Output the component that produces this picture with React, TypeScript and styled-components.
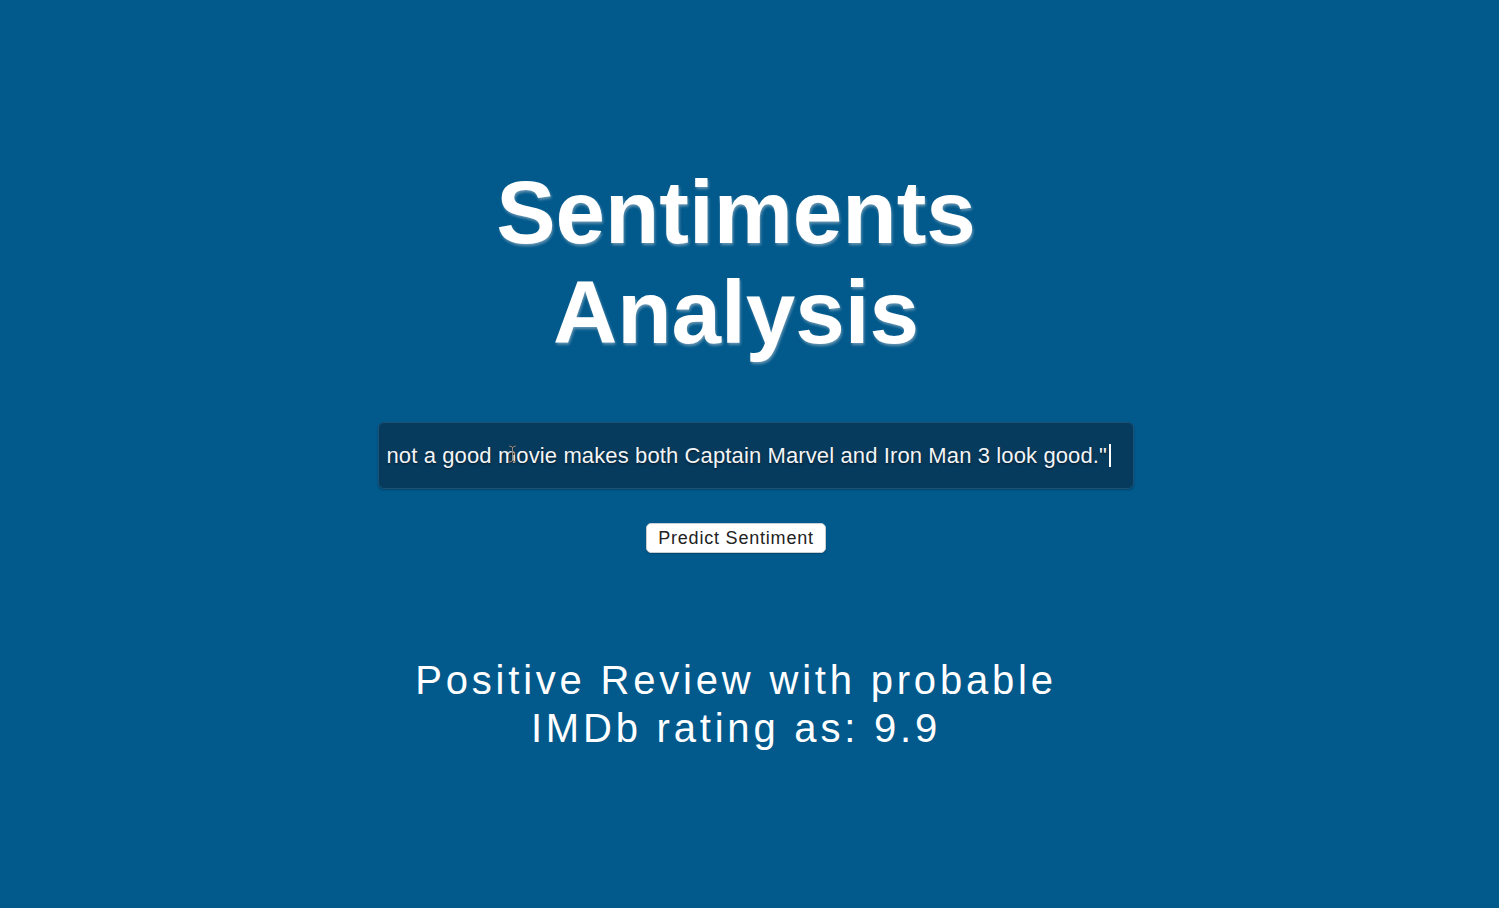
import React from "react";
import styled, { createGlobalStyle } from "styled-components";

const Global = createGlobalStyle`
  html, body { margin: 0; padding: 0; }
  body {
    background: #01598c;
    font-family: "Liberation Sans", Arial, Helvetica, sans-serif;
    min-height: 908px;
  }
`;

const Page = styled.main`
  display: flex;
  flex-direction: column;
  align-items: center;
  padding: 162px 27px 0 0;
  min-height: 908px;
  box-sizing: border-box;
`;

const Title = styled.h1`
  margin: 0;
  width: 620px;
  text-align: center;
  color: #ffffff;
  font-size: 89px;
  line-height: 100px;
  font-weight: 700;
  text-shadow: 1px 2px 3px rgba(190, 200, 210, 0.55);
`;

const Field = styled.div`
  position: relative;
  margin: 60px 0 0 40px;
  width: 756px;
  height: 67px;
  box-sizing: border-box;
  padding: 0 22px 0 17px;
  display: flex;
  align-items: center;
  justify-content: flex-end;
  overflow: hidden;
  background: #073b5d;
  border: 1px solid #1d5275;
  border-radius: 6px;
  box-shadow: 0 1px 2px rgba(0, 0, 0, 0.25);
`;

const FieldText = styled.span`
  flex: none;
  white-space: nowrap;
  color: #f2f5f8;
  font-size: 22px;
  letter-spacing: 0.12px;
  text-shadow: 0 1px 2px rgba(0, 0, 0, 0.6);
`;

const Caret = styled.span`
  flex: none;
  width: 2px;
  height: 23px;
  margin-left: 2px;
  background: #ffffff;
`;

const Pointer = styled.svg`
  position: absolute;
  left: 129px;
  top: 22px;
`;

const Button = styled.button`
  margin-top: 34px;
  width: 180px;
  height: 30px;
  padding: 0;
  border: 1px solid #c8ced4;
  border-radius: 5px;
  background: #ffffff;
  color: #222222;
  font-family: "Liberation Sans", Arial, Helvetica, sans-serif;
  font-size: 18px;
  letter-spacing: 0.8px;
  cursor: pointer;
  box-shadow: 0 1px 1px rgba(0, 0, 0, 0.2);
`;

const Result = styled.p`
  margin: 103px 0 0 0;
  width: 700px;
  text-align: center;
  color: #ffffff;
  font-size: 40px;
  line-height: 48px;
  letter-spacing: 3.8px;
`;

export default function App() {
  return (
    <>
      <Global />
      <Page>
        <Title>Sentiments Analysis</Title>
        <Field>
          <FieldText>
            not a good movie makes both Captain Marvel and Iron Man 3 look good."
          </FieldText>
          <Caret />
          <Pointer width="9" height="18" viewBox="0 0 9 18">
            <path
              d="M1 1 Q4.5 1 4.5 3 Q4.5 1 8 1 M4.5 3 V15 M1 17 Q4.5 17 4.5 15 Q4.5 17 8 17 M2.5 9 H6.5"
              stroke="#1a1a1a"
              strokeWidth="1.6"
              fill="none"
            />
            <path
              d="M1 1 Q4.5 1 4.5 3 Q4.5 1 8 1 M4.5 3 V15 M1 17 Q4.5 17 4.5 15 Q4.5 17 8 17"
              stroke="#d9d9d9"
              strokeWidth="0.6"
              fill="none"
            />
          </Pointer>
        </Field>
        <Button>Predict Sentiment</Button>
        <Result>Positive Review with probable IMDb rating as: 9.9</Result>
      </Page>
    </>
  );
}
